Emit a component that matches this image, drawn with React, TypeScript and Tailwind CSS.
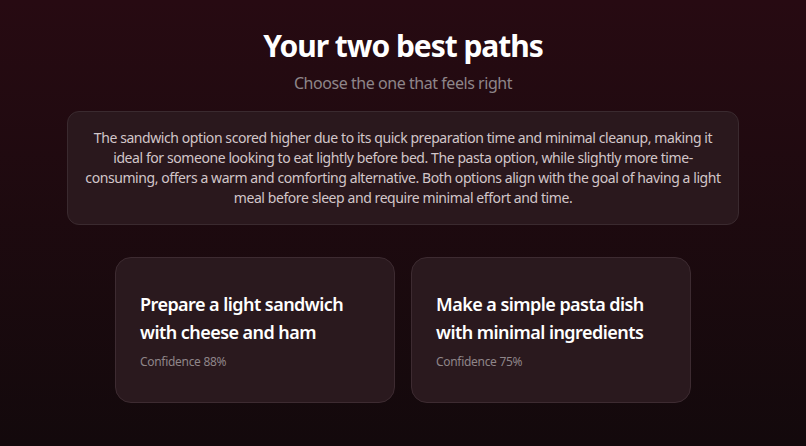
import React from "react";

const options = [
  { title: "Prepare a light sandwich with cheese and ham", confidence: 88 },
  { title: "Make a simple pasta dish with minimal ingredients", confidence: 75 },
];

export default function App() {
  return (
    <div
      className="min-h-[446px] w-full bg-gradient-to-b from-[#270a12] to-[#13090c] flex flex-col items-center pt-7 px-4"
      style={{ fontFamily: '"Noto Sans", "Open Sans", sans-serif' }}
    >
      <h1 className="text-[30px] leading-9 font-bold text-white tracking-[-1.05px]">Your two best paths</h1>
      <p className="mt-[7px] text-base leading-6 text-[#8e8589] tracking-[-0.45px]">Choose the one that feels right</p>

      <div className="mt-4 w-full max-w-2xl rounded-xl border border-[#3a2a2f] bg-[#2a181d] px-4 py-4 text-center text-sm leading-5 text-[#d2c6c9] tracking-[-0.42px]">
        The sandwich option scored higher due to its quick preparation time and minimal cleanup, making it ideal for
        someone looking to eat lightly before bed. The pasta option, while slightly more time-consuming, offers a warm
        and comforting alternative. Both options align with the goal of having a light meal before sleep and require
        minimal effort and time.
      </div>

      <div className="mt-8 grid w-full max-w-xl grid-cols-2 gap-4">
        {options.map((o) => (
          <div
            key={o.title}
            className="rounded-2xl border border-[#3d2b31] bg-[#2a191e] px-6 py-8"
          >
            <h2 className="text-lg leading-7 font-semibold text-white tracking-[-0.55px]">{o.title}</h2>
            <p className="mt-2 text-xs leading-4 text-[#8f8589] tracking-[-0.3px]">Confidence {o.confidence}%</p>
          </div>
        ))}
      </div>
    </div>
  );
}
